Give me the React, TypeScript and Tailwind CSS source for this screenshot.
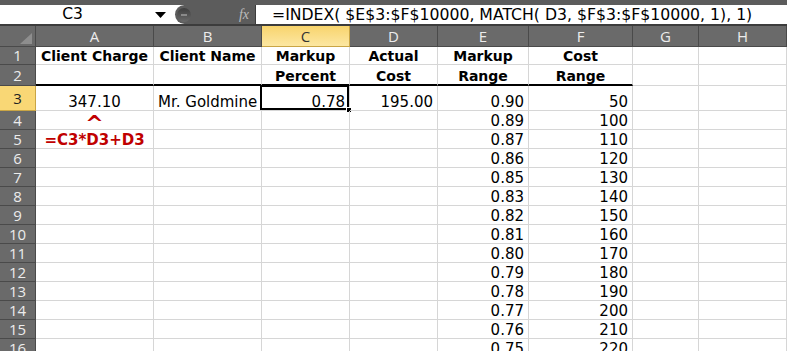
import React from 'react'

const colW = ['w-[118px]', 'w-[108px]', 'w-[88px]', 'w-[88px]', 'w-[91px]', 'w-[104px]', 'w-[66px]', 'w-[88px]']
const colNames = ['A', 'B', 'C', 'D', 'E', 'F', 'G', 'H']

const markup = ['0.90', '0.89', '0.87', '0.86', '0.85', '0.83', '0.82', '0.81', '0.80', '0.79', '0.78', '0.77', '0.76', '0.75']
const cost = ['50', '100', '110', '120', '130', '140', '150', '160', '170', '180', '190', '200', '210', '220']

type CellData = { t?: string; a?: 'l' | 'c' | 'r'; red?: boolean; bold?: boolean; caret?: boolean }

type RowData = { n: number; h: string; cells: CellData[] }

const rows: RowData[] = [
  {
    n: 1,
    h: 'h-[18px]',
    cells: [
      { t: 'Client Charge', a: 'c', bold: true },
      { t: 'Client Name', a: 'c', bold: true },
      { t: 'Markup', a: 'c', bold: true },
      { t: 'Actual', a: 'c', bold: true },
      { t: 'Markup', a: 'c', bold: true },
      { t: 'Cost', a: 'c', bold: true },
    ],
  },
  {
    n: 2,
    h: 'h-[21px]',
    cells: [
      {},
      {},
      { t: 'Percent', a: 'c', bold: true },
      { t: 'Cost', a: 'c', bold: true },
      { t: 'Range', a: 'c', bold: true },
      { t: 'Range', a: 'c', bold: true },
    ],
  },
  {
    n: 3,
    h: 'h-[25px]',
    cells: [
      { t: '347.10', a: 'c' },
      { t: 'Mr. Goldmine', a: 'l' },
      { t: '0.78', a: 'r' },
      { t: '195.00', a: 'r' },
      { t: markup[0], a: 'r' },
      { t: cost[0], a: 'r' },
    ],
  },
  ...markup.slice(1).map((m, i) => ({
    n: i + 4,
    h: 'h-[19px]',
    cells: [
      i === 0
        ? { t: '^', a: 'c' as const, red: true, bold: true, caret: true }
        : i === 1
          ? { t: '=C3*D3+D3', a: 'c' as const, red: true, bold: true }
          : {},
      {},
      {},
      {},
      { t: m, a: 'r' as const },
      { t: cost[i + 1], a: 'r' as const },
    ],
  })),
]

function Cell({ d, w, thick, selected }: { d: CellData; w: string; thick: boolean; selected: boolean }) {
  const align = d.a === 'c' ? 'justify-center' : d.a === 'r' ? 'justify-end pr-[4px]' : 'justify-start pl-[4px]'
  const size = d.caret
    ? 'text-[22px] leading-[17px] translate-y-[3px]'
    : d.red
      ? 'text-[15px] leading-[16px]'
      : d.bold
        ? 'text-[14px] leading-[16px]'
        : 'text-[15px] leading-[16px]'
  return (
    <div
      className={`relative flex items-end shrink-0 border-r border-[#d6d6d6] ${w} ${align} ${
        thick ? 'border-b-2 border-b-black' : 'border-b border-b-[#d6d6d6]'
      }`}
    >
      {d.t && (
        <span className={`whitespace-nowrap ${size} ${d.bold ? 'font-bold' : ''} ${d.red ? 'text-[#c00000]' : 'text-black'}`}>
          {d.t}
        </span>
      )}
      {selected && (
        <>
          <div className="absolute -left-[2px] -top-[1px] right-0 bottom-0 border-2 border-black" />
          <div className="absolute -right-[3px] -bottom-[3px] w-[6px] h-[6px] bg-black border border-white" />
        </>
      )}
    </div>
  )
}

export default function App() {
  return (
    <div className="w-[787px] h-[351px] overflow-hidden bg-white" style={{ fontFamily: '"DejaVu Sans", Verdana, sans-serif' }}>
      {/* Formula bar */}
      <div className="flex h-[26px] bg-[#5c5c5c] pt-[5px] border-b-2 border-[#3c3c3c]">
        <div className="flex items-center w-[175px] h-[19px] bg-white">
          <span className="w-[145px] text-center text-[15.5px] text-black">C3</span>
          <svg width="11" height="6" viewBox="0 0 11 6" className="ml-[10px]">
            <polygon points="0,0 11,0 5.5,6" fill="#000" />
          </svg>
        </div>
        <div className="w-[80px] h-[19px] bg-white">
          <div className="flex items-center h-full bg-[#5c5c5c] rounded-l-[10px] pl-[2px]">
            <div className="flex items-center justify-center w-[14px] h-[14px] rounded-full bg-gradient-to-b from-[#3f3f3f] to-[#6a6a6a]">
              <div className="w-[6px] h-[2px] bg-[#8a8a8a]" />
            </div>
            <span className="ml-auto mr-[6px] text-[14px] italic text-[#bdbdbd]" style={{ fontFamily: '"Liberation Serif", serif' }}>
              fx
            </span>
          </div>
        </div>
        <div className="flex-1 h-[19px] bg-white border-l border-[#3c3c3c] pl-[16px] flex items-center">
          <span className="text-[15.7px] text-black whitespace-nowrap">=INDEX( $E$3:$F$10000, MATCH( D3, $F$3:$F$10000, 1), 1)</span>
        </div>
      </div>

      {/* Column headers */}
      <div className="flex h-[21px]" style={{ fontFamily: '"Open Sans", sans-serif' }}>
        <div className="relative w-[36px] shrink-0 bg-[#6a6a6a] border-r border-b border-[#4a4a4a]">
          <svg width="12" height="11" viewBox="0 0 12 11" className="absolute right-[3px] bottom-[2px]">
            <polygon points="12,0 12,11 0,11" fill="#8e8e8e" />
          </svg>
        </div>
        {colNames.map((c, i) => (
          <div
            key={c}
            className={`flex items-center justify-center shrink-0 text-[15px] border-r border-b ${colW[i]} ${
              c === 'C'
                ? 'bg-gradient-to-b from-[#f8d46c] to-[#fce7a1] border-[#c9a545] text-[#333]'
                : 'bg-[#6a6a6a] border-[#4a4a4a] text-[#ececec]'
            }`}
          >
            {c}
          </div>
        ))}
      </div>

      {/* Rows */}
      {rows.map((r) => (
        <div key={r.n} className={`flex ${r.h}`}>
          <div
            className={`flex items-center justify-center w-[36px] shrink-0 text-[15px] border-r border-b ${
              r.n === 3 ? 'bg-[#f9d775] border-[#c9a545] text-[#222]' : 'bg-[#6a6a6a] border-[#4a4a4a] text-[#ececec]'
            }`}
            style={{ fontFamily: '"Open Sans", sans-serif' }}
          >
            {r.n}
          </div>
          {colW.map((w, i) => (
            <Cell key={i} d={r.cells[i] ?? {}} w={w} thick={r.n === 2 && i < 6} selected={r.n === 3 && i === 2} />
          ))}
        </div>
      ))}
    </div>
  )
}
